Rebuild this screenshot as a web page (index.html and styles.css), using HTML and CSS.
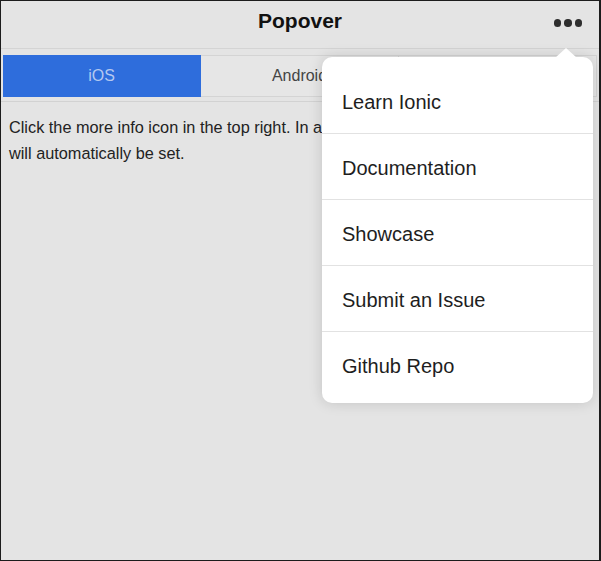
FILE: index.html
```html
<!DOCTYPE html>
<html lang="en">
<head>
<meta charset="utf-8">
<title>Popover</title>
<link rel="stylesheet" href="styles.css">
</head>
<body>
<div class="screen">
  <header class="bar">
    <h1 class="title">Popover</h1>
    <button class="more" aria-label="More"><span></span><span></span><span></span></button>
  </header>
  <div class="subbar">
    <div class="segment">
      <button class="seg active">iOS</button>
      <button class="seg">Android</button>
      <button class="seg">Windows</button>
    </div>
  </div>
  <p class="content">Click the more info icon in the top right. In an actual app, the platform style<br>will automatically be set.</p>

  <div class="popover">
    <div class="arrow"></div>
    <ul class="menu">
      <li>Learn Ionic</li>
      <li>Documentation</li>
      <li>Showcase</li>
      <li>Submit an Issue</li>
      <li>Github Repo</li>
    </ul>
  </div>
</div>
</body>
</html>
```

FILE: styles.css
```css
* { box-sizing: border-box; }

html, body {
  margin: 0;
  padding: 0;
  background: #e4e4e4;
}

body {
  font-family: "Liberation Sans", Arial, Helvetica, sans-serif;
  color: #222;
}

.screen {
  position: relative;
  width: 601px;
  height: 561px;
  border: 1px solid #1c1c1c;
  border-right-width: 2px;
  background: #e4e4e4;
  overflow: hidden;
}

.bar {
  position: relative;
  height: 48px;
  border-bottom: 1px solid #d4d4d4;
  display: flex;
  align-items: center;
  justify-content: center;
}

.title {
  margin: 0;
  font-size: 21px;
  font-weight: bold;
  color: #111;
  line-height: 1;
  padding-bottom: 8px;
}

.more {
  position: absolute;
  right: 17px;
  top: 18px;
  display: flex;
  gap: 3px;
  padding: 0;
  border: 0;
  background: none;
}

.more span {
  width: 7.5px;
  height: 7.5px;
  border-radius: 50%;
  background: #2e2e2e;
}

.subbar {
  padding: 6px 2px 4px 2px;
  border-bottom: 1px solid #d2d2d2;
}

.segment {
  display: flex;
  height: 42px;
}

.seg {
  flex: 1;
  margin: 0;
  border: 1px solid #d4d4d4;
  border-left-width: 0;
  background: #e6e6e6;
  font-family: inherit;
  font-size: 16px;
  color: #444;
  padding: 0;
}

.seg.active {
  background: #2e6ddc;
  border-color: #2e6ddc;
  color: #b4c8f0;
}

.content {
  margin: 0;
  padding: 12px 8px 0 8px;
  font-size: 16.3px;
  line-height: 26px;
  color: #222;
}

.popover {
  position: absolute;
  left: 321px;
  top: 56px;
  width: 271px;
  background: #fff;
  border-radius: 10px;
  box-shadow: 0 0 14px rgba(0, 0, 0, 0.15);
  padding: 11px 0 6px 0;
}

.arrow {
  position: absolute;
  top: -9px;
  left: 233px;
  width: 22px;
  height: 10px;
  background: #fff;
  clip-path: polygon(50% 0, 100% 100%, 0 100%);
}

.menu {
  list-style: none;
  margin: 0;
  padding: 0;
}

.menu li {
  height: 66px;
  display: flex;
  align-items: center;
  padding: 3px 20px 0 20px;
  font-size: 20px;
  color: #1e1e1e;
  border-bottom: 1px solid #e2e2e2;
}

.menu li:last-child {
  border-bottom: 0;
  height: 65px;
}
```
